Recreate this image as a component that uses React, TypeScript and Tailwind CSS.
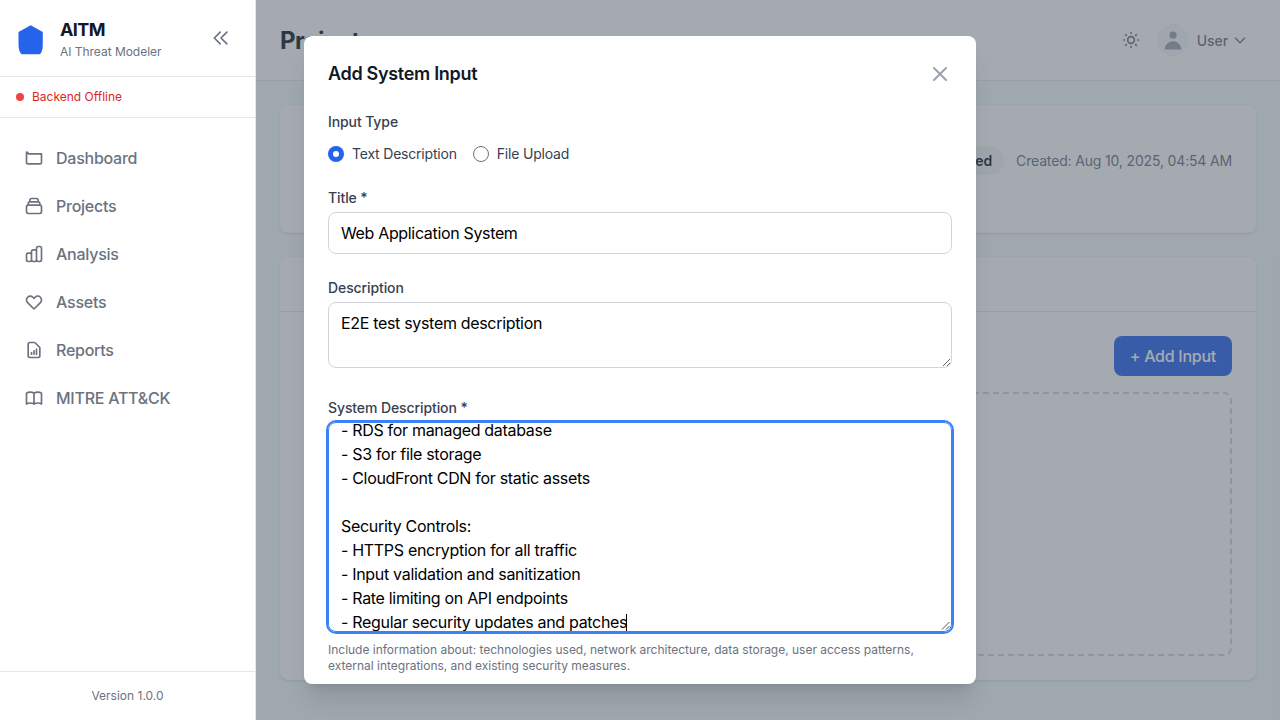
import React from "react";

const nav = [
  { label: "Dashboard", d: "M3 5v12a2 2 0 002 2h14a2 2 0 002-2V9a2 2 0 00-2-2H5a2 2 0 00-2-2zM19 7h2v2" },
  { label: "Projects", d: "M19 11H5m14 0a2 2 0 012 2v6a2 2 0 01-2 2H5a2 2 0 01-2-2v-6a2 2 0 012-2m14 0V9a2 2 0 00-2-2M5 11V9a2 2 0 012-2m0 0V5a2 2 0 012-2h6a2 2 0 012 2v2M7 7h10" },
  { label: "Analysis", d: "M9 19v-6a2 2 0 00-2-2H5a2 2 0 00-2 2v6a2 2 0 002 2h2a2 2 0 002-2zm0 0V9a2 2 0 012-2h2a2 2 0 012 2v10m-6 0a2 2 0 002 2h2a2 2 0 002-2m0 0V5a2 2 0 012-2h2a2 2 0 012 2v14a2 2 0 01-2 2h-2a2 2 0 01-2-2z" },
  { label: "Assets", d: "M4.318 6.318a4.5 4.5 0 000 6.364L12 20.364l7.682-7.682a4.5 4.5 0 00-6.364-6.364L12 7.636l-1.318-1.318a4.5 4.5 0 00-6.364 0z" },
  { label: "Reports", d: "M9 17v-2m3 2v-4m3 4v-6m2 10H7a2 2 0 01-2-2V5a2 2 0 012-2h5.586a1 1 0 01.707.293l5.414 5.414a1 1 0 01.293.707V19a2 2 0 01-2 2z" },
  { label: "MITRE ATT&CK", d: "M12 6.253v13m0-13C10.832 5.477 9.246 5 7.5 5S4.168 5.477 3 6.253v13C4.168 18.477 5.754 18 7.5 18s3.332.477 4.5 1.253m0-13C13.168 5.477 14.754 5 16.5 5c1.747 0 3.332.477 4.5 1.253v13C19.832 18.477 18.247 18 16.5 18c-1.746 0-3.332.477-4.5 1.253" },
];

const details = `- RDS for managed database
- S3 for file storage
- CloudFront CDN for static assets

Security Controls:
- HTTPS encryption for all traffic
- Input validation and sanitization
- Rate limiting on API endpoints
- Regular security updates and patches`;

function Icon({ d, className }: { d: string; className: string }) {
  return (
    <svg className={className} viewBox="0 0 24 24" fill="none" stroke="currentColor" strokeWidth={2} strokeLinecap="round" strokeLinejoin="round">
      <path d={d} />
    </svg>
  );
}

function Sidebar() {
  return (
    <aside className="flex w-64 shrink-0 flex-col border-r border-[#e5e7eb] bg-white">
      <div className="flex h-[77px] items-center border-b border-[#e5e7eb] px-4">
        <svg className="mt-[3px] mr-3 h-8 w-8 text-[#2563eb]" viewBox="0 0 32 32" fill="currentColor">
          <path d="M14.7 1.2 L26.8 8 V20 C26.8 25 26 28.2 24 30.3 H5.6 C3.5 28.2 2.5 25 2.5 20 V8 Z" />
        </svg>
        <div className="flex-1 pt-1">
          <div className="text-lg font-bold leading-[22px] tracking-[-0.6px] text-[#111827]">AITM</div>
          <div className="mt-0.5 text-xs leading-[18px] tracking-[-0.03px] text-[#6b7280]">AI Threat Modeler</div>
        </div>
        <Icon className="mr-2 h-5 w-5 text-[#6b7280]" d="M11 19l-7-7 7-7m8 14l-7-7 7-7" />
      </div>
      <div className="flex h-[41px] items-center gap-2 border-b border-[#e5e7eb] px-4 text-xs text-[#dc2626]">
        <span className="h-2 w-2 rounded-full bg-[#ef4444]" />
        Backend Offline
      </div>
      <nav className="flex flex-1 flex-col gap-2 px-3 pt-5">
        {nav.map((n) => (
          <a key={n.label} className="flex h-10 items-center gap-3 px-3 font-medium tracking-[-0.25px] text-[#6b7280]">
            <Icon className="h-5 w-5" d={n.d} />
            {n.label}
          </a>
        ))}
      </nav>
      <div className="flex h-[49px] items-center justify-center border-t border-[#e5e7eb] text-xs text-[#6b7280]">Version 1.0.0</div>
    </aside>
  );
}

function Page() {
  return (
    <div className="flex h-full flex-col bg-[#f3f8fa]">
      <header className="flex h-[81px] shrink-0 items-center border-b border-[#e5e7eb] bg-white px-6">
        <h1 className="flex-1 pt-0.5 text-2xl font-bold tracking-[-0.5px] text-[#111827]">Projects</h1>
        <Icon className="mr-4 h-5 w-5 text-[#6b7280]" d="M12 3v1m0 16v1m9-9h-1M4 12H3m15.364 6.364l-.707-.707M6.343 6.343l-.707-.707m12.728 0l-.707.707M6.343 17.657l-.707.707M16 12a4 4 0 11-8 0 4 4 0 018 0z" />
        <div className="flex items-center pr-2 text-[#6b7280]">
          <span className="mr-2 flex h-8 w-8 items-center justify-center rounded-full bg-[#f3f6f8]">
            <svg className="h-6 w-6 text-[#9ca3af]" viewBox="0 0 20 20" fill="currentColor">
              <path fillRule="evenodd" clipRule="evenodd" d="M10 9a3 3 0 100-6 3 3 0 000 6zm-7 9a7 7 0 1114 0H3z" />
            </svg>
          </span>
          <span className="mr-1 pt-0.5 text-sm font-medium tracking-[-0.1px]">User</span>
          <Icon className="h-4 w-4" d="M19 9l-7 7-7-7" />
        </div>
      </header>
      <main className="flex flex-col gap-6 p-6">
        <section className="flex h-32 items-start justify-end gap-3 rounded-lg bg-white px-6 pt-[42px] text-sm shadow-sm">
          <span className="rounded-full bg-[#f1f5f7] px-3 py-1 font-semibold tracking-[-0.1px] text-[#111827]">Not Started</span>
          <span className="py-1 tracking-[-0.16px] text-[#6b7280]">Created: Aug 10, 2025, 04:54 AM</span>
        </section>
        <section className="flex h-[423px] flex-col rounded-lg bg-white shadow-sm">
          <div className="h-[55px] shrink-0 border-b border-[#e5e7eb]" />
          <div className="flex flex-1 flex-col items-end gap-4 p-6">
            <button className="h-10 rounded-lg bg-[#2563eb] px-4 font-medium tracking-[-0.26px] text-white">+ Add Input</button>
            <div className="w-full flex-1 rounded-lg border-2 border-dashed border-[#d1d5db]" />
          </div>
        </section>
      </main>
    </div>
  );
}

function Dialog() {
  return (
    <div className="h-[648px] w-[672px] overflow-hidden rounded-lg bg-white px-6 pt-6 shadow-xl">
      <div className="flex h-7 items-center justify-between">
        <h3 className="text-lg font-semibold tracking-[-0.31px] text-[#111827]">Add System Input</h3>
        <Icon className="h-6 w-6 text-[#9ca3af]" d="M6 18L18 6M6 6l12 12" />
      </div>
      <div className="pt-6 text-sm tracking-[-0.1px] text-[#374151]">
        <div className="font-medium">Input Type</div>
        <div className="mt-3 flex items-center tracking-[-0.2px]">
          <span className="mr-2 flex h-4 w-4 items-center justify-center rounded-full bg-[#2563eb]">
            <span className="h-1.5 w-1.5 rounded-full bg-white" />
          </span>
          Text Description
          <span className="mr-2 ml-4 h-4 w-4 rounded-full border border-[#6b7280]" />
          File Upload
        </div>
        <label className="mt-6 block font-medium">Title *</label>
        <input className="mt-1 block h-[42px] w-full rounded-lg border border-[#d1d5db] px-3 text-base tracking-[-0.34px] text-black" defaultValue="Web Application System" />
        <label className="mt-6 block font-medium">Description</label>
        <textarea className="mt-1 block h-[66px] w-full rounded-lg border border-[#d1d5db] px-3 py-2 text-base tracking-[-0.32px] text-black" defaultValue="E2E test system description" />
        <label className="mt-[30px] block font-medium">System Description *</label>
        <div className="relative mt-1 h-[210px] overflow-hidden rounded-lg border border-[#3b82f6] px-3 text-base tracking-[-0.31px] whitespace-pre text-black outline-2 outline-[#3b82f6]">
          <div className="-mt-[5px]">{details}<span className="-mb-1 -ml-px inline-block h-[18px] w-px bg-black" /></div>
          <svg className="absolute right-0 bottom-0 h-[10px] w-[10px] text-gray-600" viewBox="0 0 10 10" stroke="currentColor">
            <path d="M1 8.5 8.5 1M5 8.5 8.5 5" />
          </svg>
        </div>
        <p className="mt-2.5 text-xs tracking-[-0.01px] text-[#6b7280]">Include information about: technologies used, network architecture, data storage, user access patterns, external integrations, and existing security measures.</p>
      </div>
    </div>
  );
}

export default function App() {
  return (
    <div className="flex h-[720px] w-[1280px] overflow-hidden font-[Inter,sans-serif]">
      <Sidebar />
      <div className="relative flex-1">
        <Page />
        <div className="absolute inset-0 bg-[#4b5563]/50 pt-9 pl-12">
          <Dialog />
        </div>
      </div>
    </div>
  );
}
